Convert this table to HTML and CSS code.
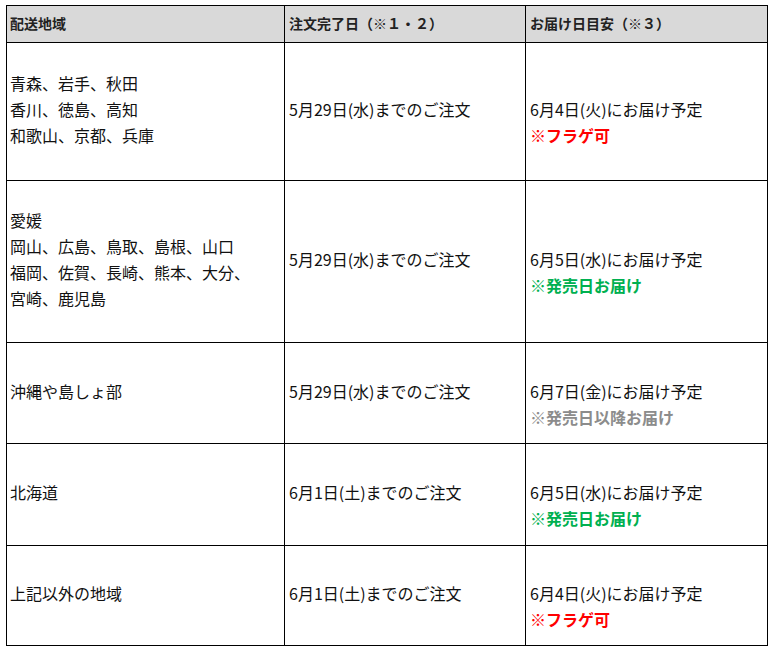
FILE: index.html
```html
<!DOCTYPE html>
<html lang="ja">
<head>
<meta charset="utf-8">
<link rel="stylesheet" href="styles.css">
</head>
<body>
<div class="wrap">
<table class="ship">
  <colgroup>
    <col class="c1"><col class="c2"><col class="c3">
  </colgroup>
  <thead>
    <tr class="head">
      <th>配送地域</th>
      <th>注文完了日（※１・２）</th>
      <th>お届け日目安（※３）</th>
    </tr>
  </thead>
  <tbody>
    <tr class="r1">
      <td>青森、岩手、秋田<br>香川、徳島、高知<br>和歌山、京都、兵庫</td>
      <td>5月29日(水)までのご注文</td>
      <td><br>6月4日(火)にお届け予定<br><span class="red">※フラゲ可</span></td>
    </tr>
    <tr class="r2">
      <td>愛媛<br>岡山、広島、鳥取、島根、山口<br>福岡、佐賀、長崎、熊本、大分、<br>宮崎、鹿児島</td>
      <td>5月29日(水)までのご注文</td>
      <td><br>6月5日(水)にお届け予定<br><span class="green">※発売日お届け</span></td>
    </tr>
    <tr class="r3">
      <td>沖縄や島しょ部</td>
      <td>5月29日(水)までのご注文</td>
      <td><br>6月7日(金)にお届け予定<br><span class="gray">※発売日以降お届け</span></td>
    </tr>
    <tr class="r4">
      <td>北海道</td>
      <td>6月1日(土)までのご注文</td>
      <td><br>6月5日(水)にお届け予定<br><span class="green">※発売日お届け</span></td>
    </tr>
    <tr class="r5">
      <td>上記以外の地域</td>
      <td>6月1日(土)までのご注文</td>
      <td><br>6月4日(火)にお届け予定<br><span class="red">※フラゲ可</span></td>
    </tr>
  </tbody>
</table>
</div>
</body>
</html>
```

FILE: styles.css
```css
html, body {
  margin: 0;
  padding: 0;
  background: #fff;
}
.wrap {
  padding: 5px 0 0 6px;
}
.ship {
  border-collapse: collapse;
  table-layout: fixed;
  width: 761px;
  font-family: "Noto Sans CJK JP", "Noto Sans", sans-serif;
  color: #111;
}
.c1 { width: 278px; }
.c2 { width: 241px; }
.c3 { width: 242px; }
.ship th, .ship td {
  border: 1px solid #000;
  padding: 0 4px;
  text-align: left;
  vertical-align: middle;
}
.ship th:first-child, .ship td:first-child {
  padding-left: 3px;
}
.ship th {
  background: #d9d9d9;
  font-size: 14px;
  font-weight: bold;
  color: #222;
  height: 34px;
  line-height: 20px;
  padding-bottom: 2px;
}
.ship td {
  font-size: 16px;
  line-height: 26px;
  padding-bottom: 5px;
}
.r1 td { height: 132px; }
.r2 td { height: 156px; }
.r3 td { height: 95px; }
.r4 td { height: 96px; }
.r5 td { height: 94px; }
.red, .green, .gray {
  font-weight: bold;
  font-size: 16px;
}
.red { color: #ff0000; }
.green { color: #00b050; }
.gray { color: #8c8c8c; }
```
